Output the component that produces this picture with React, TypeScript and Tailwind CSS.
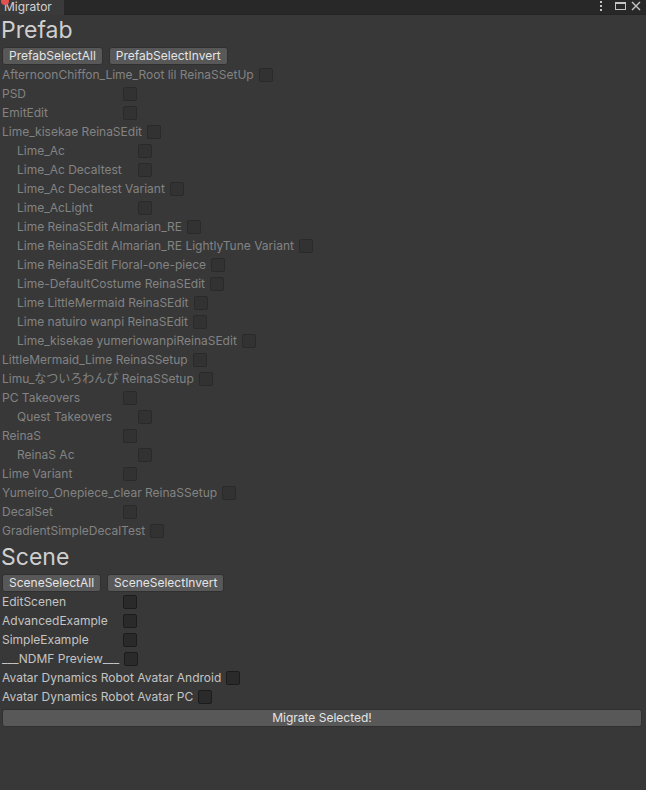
import React from 'react';

type Item = { label: string; indent?: boolean };

const prefabs: Item[] = [
  { label: 'AfternoonChiffon_Lime_Root lil ReinaSSetUp' },
  { label: 'PSD' },
  { label: 'EmitEdit' },
  { label: 'Lime_kisekae ReinaSEdit' },
  { label: 'Lime_Ac', indent: true },
  { label: 'Lime_Ac Decaltest', indent: true },
  { label: 'Lime_Ac Decaltest Variant', indent: true },
  { label: 'Lime_AcLight', indent: true },
  { label: 'Lime ReinaSEdit Almarian_RE', indent: true },
  { label: 'Lime ReinaSEdit Almarian_RE LightlyTune Variant', indent: true },
  { label: 'Lime ReinaSEdit Floral-one-piece', indent: true },
  { label: 'Lime-DefaultCostume ReinaSEdit', indent: true },
  { label: 'Lime LittleMermaid ReinaSEdit', indent: true },
  { label: 'Lime natuiro wanpi ReinaSEdit', indent: true },
  { label: 'Lime_kisekae yumeriowanpiReinaSEdit', indent: true },
  { label: 'LittleMermaid_Lime ReinaSSetup' },
  { label: 'Limu_なついろわんぴ ReinaSSetup' },
  { label: 'PC Takeovers' },
  { label: 'Quest Takeovers', indent: true },
  { label: 'ReinaS' },
  { label: 'ReinaS Ac', indent: true },
  { label: 'Lime Variant' },
  { label: 'Yumeiro_Onepiece_clear ReinaSSetup' },
  { label: 'DecalSet' },
  { label: 'GradientSimpleDecalTest' },
];

const scenes: Item[] = [
  { label: 'EditScenen' },
  { label: 'AdvancedExample' },
  { label: 'SimpleExample' },
  { label: '___NDMF Preview___' },
  { label: 'Avatar Dynamics Robot Avatar Android' },
  { label: 'Avatar Dynamics Robot Avatar PC' },
];

function Button({ children }: { children: React.ReactNode }) {
  return (
    <button className="h-[18px] px-[6px] bg-[#585858] border border-[#303030] rounded-[3px] text-[12px] leading-[16px] text-[#e4e4e4] whitespace-nowrap">
      {children}
    </button>
  );
}

function Row({ item, dim }: { item: Item; dim?: boolean }) {
  return (
    <div className={`flex items-center h-[19px] ${item.indent ? 'pl-[17px]' : 'pl-[2px]'}`}>
      <span
        className={`min-w-[116px] mr-[5px] text-[12px] leading-[19px] whitespace-nowrap ${
          dim ? 'text-[#838383]' : 'text-[#c4c4c4]'
        }`}
      >
        {item.label}
      </span>
      <span
        className={`w-[14px] h-[14px] rounded-[2px] border ${
          dim ? 'bg-[#323232] border-[#2a2a2a]' : 'bg-[#2a2a2a] border-[#1c1c1c]'
        }`}
      />
    </div>
  );
}

export default function App() {
  return (
    <div
      className="relative w-[646px] h-[790px] bg-[#383838] overflow-hidden"
      style={{ fontFamily: 'Inter, "Noto Sans CJK JP", sans-serif' }}
    >
      {/* Tab bar */}
      <div className="flex h-[15px] bg-[#282828]">
        <div className="w-[64px] h-[15px] bg-[#3a3a3a] pl-[4px] text-[12px] leading-[14px] text-[#d2d2d2]">
          Migrator
        </div>
        <div className="flex-1 border-b border-[#232323] flex items-start justify-end gap-[5px] pr-[5px] pt-[1px]">
          <svg width="4" height="12" viewBox="0 0 4 12" className="mr-[7px]">
            <rect x="1" y="0" width="2" height="2" fill="#c4c4c4" />
            <rect x="1" y="4" width="2" height="2" fill="#c4c4c4" />
            <rect x="1" y="8" width="2" height="2" fill="#c4c4c4" />
          </svg>
          <svg width="11" height="10" viewBox="0 0 11 10">
            <rect x="0.5" y="1.5" width="10" height="7" fill="none" stroke="#c4c4c4" />
            <rect x="0" y="1" width="11" height="2" fill="#c4c4c4" />
          </svg>
          <svg width="10" height="10" viewBox="0 0 10 10">
            <path d="M1 1 L9 9 M9 1 L1 9" stroke="#c4c4c4" strokeWidth="1.4" />
          </svg>
        </div>
      </div>
      <span className="absolute left-[1px] top-[-3px] w-[8px] h-[8px] rounded-full bg-[#e4514f]" />

      {/* Prefab */}
      <div className="h-[32px] pl-[1px] text-[23px] leading-[30px] text-[#cfcfcf]">Prefab</div>
      <div className="flex gap-[6px] pl-[2px]">
        <Button>PrefabSelectAll</Button>
        <Button>PrefabSelectInvert</Button>
      </div>
      <div>
        {prefabs.map((p, i) => (
          <Row key={i} item={p} dim />
        ))}
      </div>

      {/* Scene */}
      <div className="pt-[2px] h-[34px] pl-[1px] text-[23px] leading-[30px] text-[#cfcfcf]">Scene</div>
      <div className="flex gap-[6px] pl-[2px]">
        <Button>SceneSelectAll</Button>
        <Button>SceneSelectInvert</Button>
      </div>
      <div>
        {scenes.map((s, i) => (
          <Row key={i} item={s} />
        ))}
      </div>

      <div className="flex mt-[3px] ml-[2px] mr-[4px]">
        <button className="w-full h-[18px] bg-[#585858] border border-[#303030] rounded-[3px] text-[12px] leading-[16px] text-[#e4e4e4]">
          Migrate Selected!
        </button>
      </div>
    </div>
  );
}
